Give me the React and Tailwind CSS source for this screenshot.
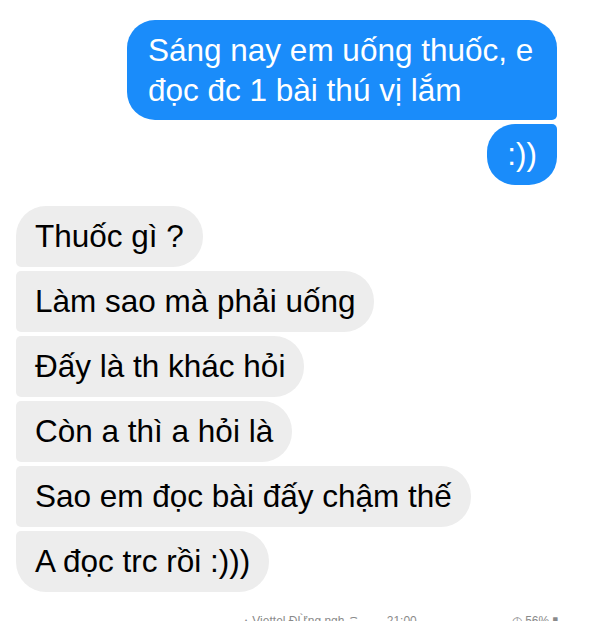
const SENT = [
  { text: "Sáng nay em uống thuốc, e đọc đc 1 bài thú vị lắm", corner: "rounded-br-[5px]" },
  { text: ":))", corner: "rounded-tr-[5px]" },
];

const RECEIVED = [
  "Thuốc gì ?",
  "Làm sao mà phải uống",
  "Đấy là th khác hỏi",
  "Còn a thì a hỏi là",
  "Sao em đọc bài đấy chậm thế",
  "A đọc trc rồi :)))",
];

// ── Left-side corner shape depends on position in the group ──
function leftCorner(i, total) {
  if (i === 0) return "rounded-bl-[5px]";
  if (i === total - 1) return "rounded-tl-[5px]";
  return "rounded-l-[5px]";
}

export default function App() {
  return (
    <div
      className="w-[600px] h-[621px] overflow-hidden bg-white flex flex-col"
      style={{ fontFamily: '"Liberation Sans", Arial, sans-serif' }}
    >
      {/* Sent messages */}
      <div className="flex flex-col items-end gap-[4px] pt-[20px] pr-[43px]">
        {SENT.map((m, i) => (
          <div
            key={i}
            className={`max-w-[430px] rounded-[28px] ${m.corner} bg-[#1a8cfa] py-[10px] text-[31.5px] text-white ${
              i === 0 ? "px-[21px] leading-[40px]" : "px-[20px] leading-[41px]"
            }`}
          >
            {m.text}
          </div>
        ))}
      </div>

      {/* Received messages */}
      <div className="mt-[21px] flex flex-col items-start gap-[4px] pl-[16px]">
        {RECEIVED.map((t, i) => (
          <div
            key={i}
            className={`rounded-[30px] ${leftCorner(i, RECEIVED.length)} bg-[#ededed] px-[19px] py-[10px] text-[31.5px] leading-[41px] text-black`}
          >
            {t}
          </div>
        ))}
      </div>

      {/* Cut-off status bar */}
      <div className="mt-[22px] flex items-start text-[12px] leading-[14px] text-[#8a8a8a]">
        <span className="ml-[243px]">▴ Viettel ĐỪng ngh ⌔</span>
        <span className="ml-[28px]">21:00</span>
        <span className="ml-[95px]">◷ 56% ▮</span>
      </div>
    </div>
  );
}
